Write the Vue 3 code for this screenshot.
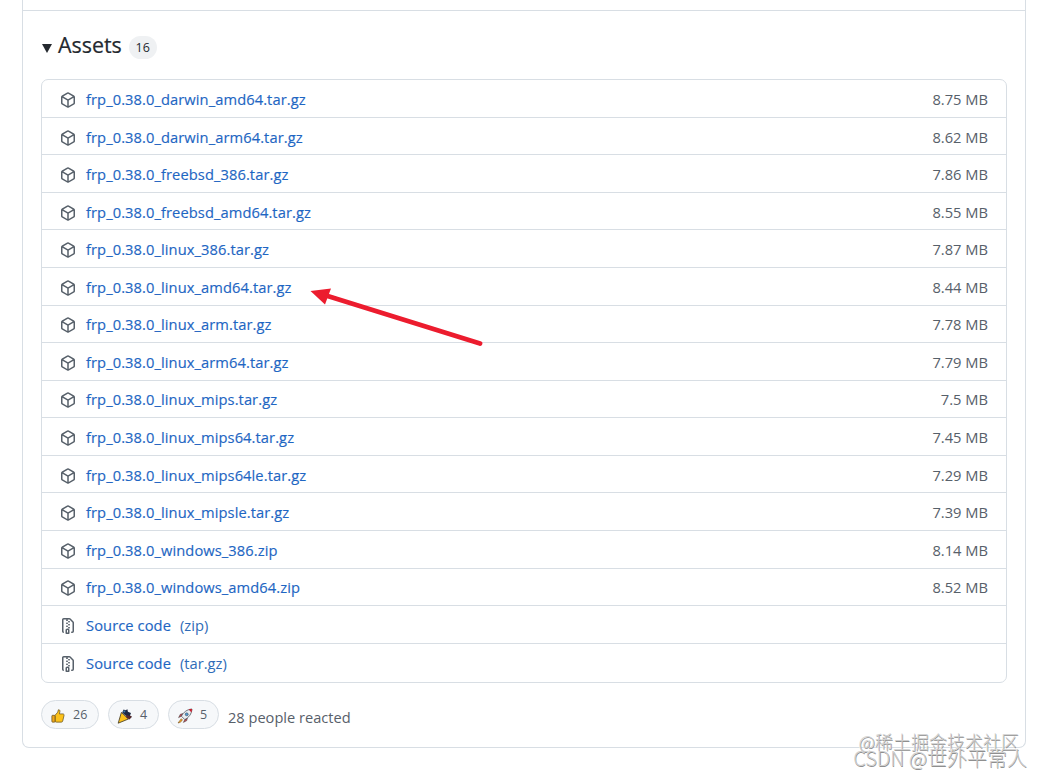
<script setup>
const packagePath = 'm8.878.392 5.25 3.045c.54.314.872.89.872 1.514v6.098a1.75 1.75 0 0 1-.872 1.514l-5.25 3.045a1.75 1.75 0 0 1-1.756 0l-5.25-3.045A1.75 1.75 0 0 1 1 11.049V4.951c0-.624.332-1.201.872-1.514L7.122.392a1.75 1.75 0 0 1 1.756 0ZM7.875 1.69l-4.63 2.685L8 7.133l4.755-2.758-4.63-2.685a.248.248 0 0 0-.25 0ZM2.5 5.677v5.372c0 .09.047.171.125.216l4.625 2.683V8.432Zm6.25 8.271 4.625-2.683a.25.25 0 0 0 .125-.216V5.677L8.75 8.432Z'
const zipPath = 'M3.5 1.75v11.5c0 .09.048.173.126.217a.75.75 0 0 1-.752 1.298A1.748 1.748 0 0 1 2 13.25V1.75C2 .784 2.784 0 3.75 0h5.586c.464 0 .909.185 1.237.513l2.914 2.914c.329.328.513.773.513 1.237v8.586A1.75 1.75 0 0 1 12.25 15h-.5a.75.75 0 0 1 0-1.5h.5a.25.25 0 0 0 .25-.25V4.664a.25.25 0 0 0-.073-.177L9.513 1.573a.25.25 0 0 0-.177-.073H7.25a.75.75 0 0 1 0 1.5h-.5a.75.75 0 0 1 0-1.5h-3a.25.25 0 0 0-.25.25Zm3.75 8.75h.5c.966 0 1.75.784 1.75 1.75v3a.75.75 0 0 1-.75.75h-2.5a.75.75 0 0 1-.75-.75v-3c0-.966.784-1.75 1.75-1.75ZM6 5.25a.75.75 0 0 1 .75-.75h.5a.75.75 0 0 1 0 1.5h-.5A.75.75 0 0 1 6 5.25Zm.75 2.25h.5a.75.75 0 0 1 0 1.5h-.5a.75.75 0 0 1 0-1.5ZM8 6.75A.75.75 0 0 1 8.75 6h.5a.75.75 0 0 1 0 1.5h-.5A.75.75 0 0 1 8 6.75ZM8.75 3h.5a.75.75 0 0 1 0 1.5h-.5a.75.75 0 0 1 0-1.5ZM8 9.75A.75.75 0 0 1 8.75 9h.5a.75.75 0 0 1 0 1.5h-.5A.75.75 0 0 1 8 9.75Zm-1 2.5v2.25h1v-2.25a.25.25 0 0 0-.25-.25h-.5a.25.25 0 0 0-.25.25Z'

const assets = [
  ['frp_0.38.0_darwin_amd64.tar.gz', '8.75 MB'],
  ['frp_0.38.0_darwin_arm64.tar.gz', '8.62 MB'],
  ['frp_0.38.0_freebsd_386.tar.gz', '7.86 MB'],
  ['frp_0.38.0_freebsd_amd64.tar.gz', '8.55 MB'],
  ['frp_0.38.0_linux_386.tar.gz', '7.87 MB'],
  ['frp_0.38.0_linux_amd64.tar.gz', '8.44 MB'],
  ['frp_0.38.0_linux_arm.tar.gz', '7.78 MB'],
  ['frp_0.38.0_linux_arm64.tar.gz', '7.79 MB'],
  ['frp_0.38.0_linux_mips.tar.gz', '7.5 MB'],
  ['frp_0.38.0_linux_mips64.tar.gz', '7.45 MB'],
  ['frp_0.38.0_linux_mips64le.tar.gz', '7.29 MB'],
  ['frp_0.38.0_linux_mipsle.tar.gz', '7.39 MB'],
  ['frp_0.38.0_windows_386.zip', '8.14 MB'],
  ['frp_0.38.0_windows_amd64.zip', '8.52 MB'],
]
const sources = ['(zip)', '(tar.gz)']
</script>

<template>
  <div class="page">
    <section class="card">
      <div class="top-rule"></div>
      <div class="content">
        <header class="head">
          <span class="caret"></span>
          <h2 class="title">Assets</h2>
          <span class="badge">16</span>
        </header>

        <ul class="list">
          <li v-for="a in assets" :key="a[0]" class="row">
            <svg class="icon" viewBox="0 0 16 16" width="16" height="16"><path :d="packagePath" fill="#57606a" /></svg>
            <a class="name">{{ a[0] }}</a>
            <span class="size">{{ a[1] }}</span>
          </li>
          <li v-for="s in sources" :key="s" class="row">
            <svg class="icon" viewBox="0 0 16 16" width="16" height="16"><path :d="zipPath" fill="#57606a" /></svg>
            <a class="name">Source code</a>
            <span class="ext">{{ s }}</span>
          </li>
        </ul>

        <div class="reactions">
          <button class="pill p1">
            <svg class="emoji" viewBox="0 0 16 16" width="14" height="16">
              <path d="M4.6 7.2 7.7 3.6 8.4.9c1.3-.3 2 .7 1.8 1.9L9.6 5.6h4.100c1 0 1.500.9 1.200 1.800l-1.500 6.400c-.2.8-.8 1.200-1.600 1.200H6.400c-.8 0-1.300-.4-1.800-.8Z" fill="#fcc21b" stroke="#5b4a1d" stroke-width=".8" stroke-linejoin="round"/>
              <rect x="1" y="7.200" width="3.600" height="7.800" rx=".8" fill="#f0a81a" stroke="#5b4a1d" stroke-width=".8"/>
            </svg>
            <span>26</span>
          </button>
          <button class="pill p2">
            <svg class="emoji" viewBox="0 0 16 16" width="16" height="16">
              <path d="M4.400 4.400 11.400 11 1.200 15.200Z" fill="#fcc21b" stroke="#3b3320" stroke-width=".8" stroke-linejoin="round"/>
              <path d="M5.200 4.600 6.600 1.400l2 .8 1.800-.9.5 2.500 3.100 1.200-1 2.600 1.900 1.400-2.600 2Z" fill="#1f2a44"/>
              <path d="M9 7 14.800 8.200 12.600 11.400 9.400 9.400Z" fill="#5a2a2a"/>
              <circle cx="7.300" cy="3.600" r="1" fill="#3c7fb1"/>
            </svg>
            <span>4</span>
          </button>
          <button class="pill p3">
            <svg class="emoji" viewBox="0 0 16 16" width="16" height="16">
              <path d="M4.400 8.200 1.600 9.600 3.400 6.200 6.400 5.600Z" fill="#c94a55" stroke="#333" stroke-width=".5"/>
              <path d="M7.800 11.600 6.400 14.400 9.800 12.600 10.400 9.600Z" fill="#c94a55" stroke="#333" stroke-width=".5"/>
              <path d="M4.400 8.200C6.400 4.200 10 1.400 15 1c-.4 5-3.200 8.600-7.200 10.600Z" fill="#e8eef2" stroke="#3a4048" stroke-width=".7" stroke-linejoin="round"/>
              <path d="M11.600 1.400c1.100-.3 2.200-.4 3.400-.4-.1 1.200-.2 2.300-.5 3.400Z" fill="#c8202f"/>
              <circle cx="9.700" cy="6.300" r="1.500" fill="#4f9bd4" stroke="#3a4048" stroke-width=".5"/>
              <path d="M4.300 10.700 1 15c1.600-.2 3.800-1.200 4.400-3.200Z" fill="#f6a821" stroke="#5c3b15" stroke-width=".5"/>
            </svg>
            <span>5</span>
          </button>
          <span class="reacted">28 people reacted</span>
        </div>
      </div>
    </section>

    <svg class="arrow" viewBox="0 0 1040 776" width="1040" height="776">
      <line x1="480" y1="343.500" x2="326" y2="295.500" stroke="#ec1c2e" stroke-width="4.800" stroke-linecap="round"/>
      <path d="M310.500 291 331 288.500 325 304.500Z" fill="#ec1c2e"/>
    </svg>

    <div class="watermark">
      <div class="wm1">@稀土掘金技术社区</div>
      <div class="wm2">CSDN @世外平常人</div>
    </div>
  </div>
</template>

<style>
html, body { margin: 0; background: #fff; }
</style>

<style scoped>
.page {
  position: relative;
  width: 1040px;
  height: 776px;
  overflow: hidden;
  background: #fff;
  font-family: "Open Sans", "Noto Sans", "Liberation Sans", sans-serif;
  color: #24292f;
}
.card {
  margin-left: 22px;
  width: 1004px;
  height: 748px;
  box-sizing: border-box;
  padding-top: 10px;
  border: 1px solid #d8dee4;
  border-top: 0;
  border-radius: 0 0 7px 7px;
}
.top-rule { height: 1px; background: #d8dee4; }
.content { padding: 0 18px; }
.head {
  display: flex;
  align-items: center;
  height: 68px;
  box-sizing: border-box;
  padding-top: 4px;
}
.caret {
  width: 0;
  height: 0;
  margin: 0 6px 0 1px;
  border-left: 5px solid transparent;
  border-right: 5px solid transparent;
  border-top: 9px solid #24292f;
  transform: translateY(1px);
}
.title {
  margin: 0;
  font-size: 21.400px;
  font-weight: 500;
  line-height: 1;
  transform: translateY(-2px);
  -webkit-text-stroke: .2px #24292f;
}
.badge {
  margin-left: 7px;
  width: 28px;
  height: 23px;
  border-radius: 12px;
  background: #eff1f3;
  font-size: 12.500px;
  font-weight: 500;
  line-height: 24px;
  text-align: center;
}
.list {
  list-style: none;
  margin: 0;
  padding: 0;
  height: 604px;
  box-sizing: border-box;
  display: grid;
  grid-template-rows: 36.770px repeat(15, 37.570px);
  border: 1px solid #d8dee4;
  border-radius: 7px;
}
.row {
  display: flex;
  align-items: center;
  box-sizing: border-box;
  padding: 1px 18px 0;
  font-size: 14.700px;
  min-height: 0;
}
.row:first-child { padding-top: 2px; }
.row:last-child { padding-top: 2px; }
.row + .row { border-top: 1px solid #d8dee4; }
.icon { flex: none; margin-right: 10px; transform: translateY(1px); }
.name { color: #1e66c3; font-weight: 500; letter-spacing: .08px; -webkit-text-stroke: .15px #1e66c3; }
.ext { margin-left: 9px; color: #2f6cb8; }
.size { margin-left: auto; color: #57606a; }
.reactions {
  display: flex;
  align-items: center;
  height: 29px;
  margin-top: 17px;
  gap: 9px;
}
.pill {
  display: flex;
  align-items: center;
  height: 29px;
  box-sizing: border-box;
  padding: 0;
  border: 1px solid #d8dee4;
  border-radius: 15px;
  background: #f6f8fa;
  color: #57606a;
  font: inherit;
  font-size: 12.500px;
}
.p1 { width: 58px; padding-left: 9px; gap: 8px; }
.p2, .p3 { width: 51px; padding-left: 8px; gap: 7px; }
.emoji { flex: none; transform: translateY(1px); }
.reacted { color: #57606a; font-size: 14.600px; transform: translateY(2px); }
.arrow {
  position: absolute;
  left: 0;
  top: 0;
  pointer-events: none;
}
.watermark {
  position: absolute;
  right: 13px;
  top: 732px;
  text-align: right;
  color: #cfcfcf;
  font-family: "Noto Sans CJK SC", "Noto Sans", sans-serif;
  font-weight: 300;
  text-shadow: .6px .6px 0 #8f8f8f, -.5px -.5px 0 #fff;
  line-height: 1;
}
.wm1 { font-size: 18px; margin-right: 8px; height: 16px; }
.wm2 { font-size: 20px; }
</style>
